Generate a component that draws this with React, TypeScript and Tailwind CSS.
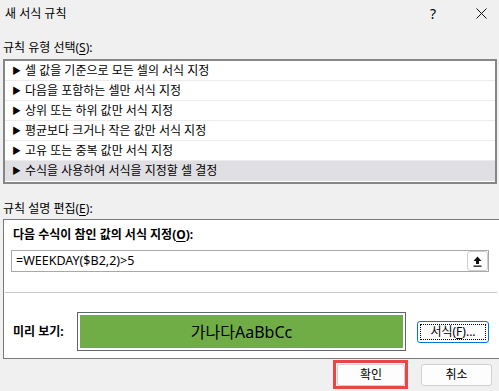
import React from 'react';

const rules = [
    '셀 값을 기준으로 모든 셀의 서식 지정',
    '다음을 포함하는 셀만 서식 지정',
    '상위 또는 하위 값만 서식 지정',
    '평균보다 크거나 작은 값만 서식 지정',
    '고유 또는 중복 값만 서식 지정',
    '수식을 사용하여 서식을 지정할 셀 결정',
];

function Key({ k }: { k: string }) {
    return (
        <>
            (<span className="underline underline-offset-2">{k}</span>)
        </>
    );
}

export default function App() {
    return (
        <div
            className="w-[499px] h-[391px] bg-[#f0f0f0] text-[12px] text-black overflow-hidden relative"
            style={{ fontFamily: '"Noto Sans", "Noto Sans CJK KR", sans-serif' }}
        >
            {/* Title bar */}
            <div className="h-[27px] flex items-center pl-[5px]">
                <span className="leading-4">새 서식 규칙</span>
                <span className="ml-auto w-[10px] text-center text-[14px] leading-4 mr-[38px]">?</span>
                <svg width="11" height="11" viewBox="0 0 11 11" className="mr-[12px]">
                    <path d="M0.5 0.5 L10.5 10.5 M10.5 0.5 L0.5 10.5" stroke="#111" strokeWidth="1" />
                </svg>
            </div>

            <div className="mt-[13px] h-4 leading-4 pl-[3px]">
                규칙 유형 선택<Key k="S" />:
            </div>

            {/* Rule type list */}
            <div className="mt-[3px] ml-[3px] w-[494px] h-[125px] border-2 border-[#868686] bg-white flex flex-col">
                {rules.map((r, i) => (
                    <div
                        key={r}
                        className={`h-[20px] flex items-center pl-[7px] ${i === rules.length - 1 ? 'bg-[#e0dfe3]' : 'border-b border-[#ececec]'}`}
                    >
                        <span className="text-[9px] w-[13px] leading-4">▶</span>
                        <span className="leading-4">{r}</span>
                    </div>
                ))}
            </div>

            <div className="mt-[17px] h-4 leading-4 pl-[3px]">
                규칙 설명 편집<Key k="E" />:
            </div>

            {/* Description panel */}
            <div className="mt-[2px] ml-[3px] h-[140px] bg-white border-y border-l border-[#7a7a7a] flex flex-col">
                <div className="mt-[7px] h-4 leading-4 pl-[9px] font-bold">
                    다음 수식이 참인 값의 서식 지정<Key k="O" />:
                </div>
                <div className="mt-[7px] ml-[7px] w-[478px] h-[22px] border border-[#a8a8a8] flex items-center">
                    <span className="pl-[4px] text-[12.5px] leading-4">=WEEKDAY($B2,2)&gt;5</span>
                    <div className="ml-auto w-[21px] h-[20px] border border-[#cfcfcf] rounded-[3px] bg-white flex items-center justify-center">
                        <svg width="9" height="11" viewBox="0 0 9 11">
                            <path d="M4.5 0.5 L8.5 5 L6 5 L6 8 L3 8 L3 5 L0.5 5 Z" fill="#111" />
                            <rect x="0.5" y="9.5" width="8" height="1.3" fill="#111" />
                        </svg>
                    </div>
                </div>
                <div className="mt-[20px] ml-[1px] mr-[2px] h-px bg-[#c8c8c8]" />
                <div className="mt-[19px] flex items-center">
                    <span className="pl-[9px] w-[73px] font-bold leading-4">미리 보기:</span>
                    <div className="w-[329px] h-[39px] border border-[#646464] p-[2px]">
                        <div className="w-full h-full bg-[#70ad47] flex items-center justify-center text-[16px] leading-5">
                            가나다AaBbCc
                        </div>
                    </div>
                    <div className="ml-[11px] w-[72px] h-[22px] border border-[#0078d7] rounded-[3px] bg-[#fdfdfd] p-[2px]">
                        <div className="w-full h-full border border-dotted border-black flex items-center justify-center leading-4">
                            서식<Key k="F" />...
                        </div>
                    </div>
                </div>
            </div>

            {/* Bottom buttons */}
            <div className="mt-[5px] flex justify-end gap-[16px] pr-[7px]">
                <div className="w-[68px] h-[22px] rounded-[3px] border border-[#d0d0d0] bg-[#fdfdfd] flex items-center justify-center leading-4">
                    확인
                </div>
                <div className="w-[71px] h-[22px] rounded-[3px] border border-[#d0d0d0] bg-[#fdfdfd] flex items-center justify-center leading-4">
                    취소
                </div>
            </div>

            {/* Red annotation box over the OK button */}
            <div className="absolute left-[333px] top-[360px] w-[75px] h-[29px] border-[3px] border-[#ee4444] pointer-events-none" />
        </div>
    );
}
